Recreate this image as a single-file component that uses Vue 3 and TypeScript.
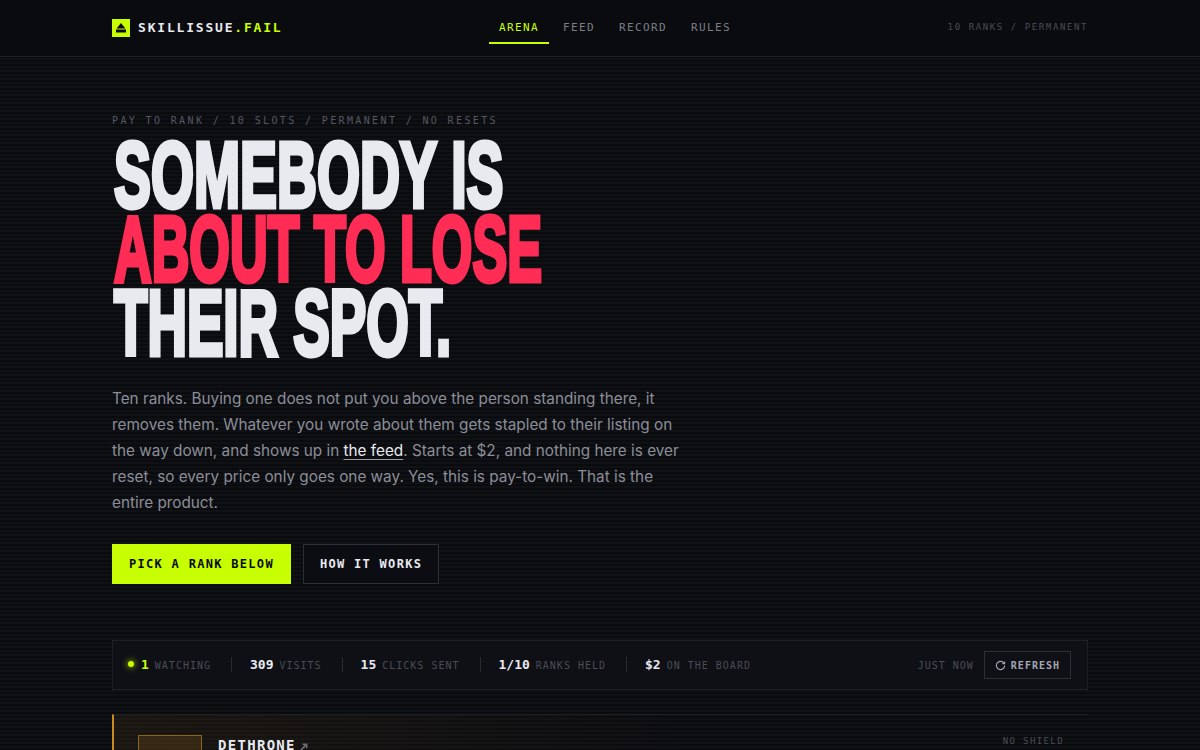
<template>
  <div class="page">
    <header class="topbar">
      <div class="topbar-inner">
        <a class="brand" href="#">
          <span class="brand-mark">
            <svg width="12" height="12" viewBox="0 0 12 12" aria-hidden="true">
              <path d="M6 1 10.5 6.5h-9z" fill="#0a0b0f" />
              <rect x="1" y="7.5" width="10" height="3" fill="#0a0b0f" />
            </svg>
          </span>
          <span class="brand-name">SKILLISSUE<em>.FAIL</em></span>
        </a>
        <nav class="nav">
          <a v-for="item in navItems" :key="item" href="#" :class="['nav-link', { active: item === 'ARENA' }]">{{ item }}</a>
        </nav>
        <div class="topbar-note">10 RANKS / PERMANENT</div>
      </div>
    </header>

    <main class="content">
      <section class="hero">
        <div class="eyebrow">PAY TO RANK / 10 SLOTS / PERMANENT / NO RESETS</div>
        <h1 class="headline">
          <span class="line-one">SOMEBODY IS</span>
          <span class="line-two">ABOUT TO LOSE</span>
          <span class="line-three">THEIR SPOT.</span>
        </h1>
        <p class="lede">
          Ten ranks. Buying one does not put you above the person standing there, it removes them. Whatever
          you wrote about them gets stapled to their listing on the way down, and shows up in
          <a href="#">the feed</a>. Starts at $2, and nothing here is ever reset, so every price only goes one
          way. Yes, this is pay-to-win. That is the entire product.
        </p>
        <div class="actions">
          <button class="btn btn-primary">PICK A RANK BELOW</button>
          <button class="btn btn-ghost">HOW IT WORKS</button>
        </div>
      </section>

      <section class="stats">
        <div class="stat-list">
          <div v-for="(stat, i) in stats" :key="stat.label" class="stat">
            <span v-if="i === 0" class="live-dot"></span>
            <strong :class="{ lime: i === 0 }">{{ stat.value }}</strong>
            <span class="stat-label">{{ stat.label }}</span>
          </div>
        </div>
        <div class="stat-side">
          <span class="updated">JUST NOW</span>
          <button class="refresh">
            <svg width="11" height="11" viewBox="0 0 24 24" fill="none" stroke="currentColor" stroke-width="2.4" aria-hidden="true">
              <path d="M21 12a9 9 0 1 1-2.6-6.4L21 8" />
              <path d="M21 3v5h-5" />
            </svg>
            REFRESH
          </button>
        </div>
      </section>

      <section class="rank-row">
        <div class="rank-badge"></div>
        <div class="rank-title">
          <span>DETHRONE</span>
          <svg class="arrow" width="8" height="8" viewBox="0 0 9 9" fill="none" stroke="currentColor" stroke-width="1.8" aria-hidden="true">
            <path d="M1 8 7.5 1.5M3 1.5h4.5V6" />
          </svg>
        </div>
        <div class="rank-shield">NO SHIELD</div>
      </section>
    </main>
  </div>
</template>

<script setup lang="ts">
  const navItems: string[] = ['ARENA', 'FEED', 'RECORD', 'RULES'];

  const stats: { value: string; label: string }[] = [
    { value: '1', label: 'WATCHING' },
    { value: '309', label: 'VISITS' },
    { value: '15', label: 'CLICKS SENT' },
    { value: '1/10', label: 'RANKS HELD' },
    { value: '$2', label: 'ON THE BOARD' },
  ];
</script>

<style>
  html,
  body {
    margin: 0;
    background: #0a0b0f;
  }
</style>

<style scoped>
  /* scanlines over the whole page, header sits above them */
  .page {
    height: 750px;
    overflow: hidden;
    color: #e8eaf0;
    font-family: Inter, "Liberation Sans", sans-serif;
    background-color: #0a0b0f;
    background-image: repeating-linear-gradient(
      180deg,
      transparent 0,
      transparent 2px,
      rgba(255, 255, 255, 0.025) 2px,
      rgba(255, 255, 255, 0.025) 4px
    );
  }

  .topbar {
    height: 57px;
    box-sizing: border-box;
    background: #0a0b0f;
    border-bottom: 1px solid #1f2025;
  }

  .topbar-inner {
    width: 976px;
    height: 100%;
    margin: 0 auto;
    display: flex;
    justify-content: space-between;
    align-items: center;
  }

  .brand {
    display: flex;
    align-items: center;
    gap: 8px;
    text-decoration: none;
  }

  .brand-mark {
    width: 18px;
    height: 18px;
    background: #c8ff00;
    display: flex;
    align-items: center;
    justify-content: center;
  }

  .brand-name {
    font: 700 13px "DejaVu Sans Mono", monospace;
    letter-spacing: 1.8px;
    color: #e8eaf0;
    position: relative;
    top: -1px;
  }

  .brand-name em {
    font-style: normal;
    color: #c8ff00;
  }

  .nav {
    display: flex;
    gap: 4px;
    margin-top: 2px;
  }

  .nav-link {
    box-sizing: border-box;
    height: 30px;
    padding: 0 10px 2px;
    display: flex;
    align-items: center;
    font: 400 11px "DejaVu Sans Mono", monospace;
    letter-spacing: 1.38px;
    color: #7c7f88;
    text-decoration: none;
    border-bottom: 2px solid transparent;
  }

  .nav-link.active {
    color: #c8ff00;
    border-bottom-color: #c8ff00;
  }

  .topbar-note {
    font: 400 9px "DejaVu Sans Mono", monospace;
    letter-spacing: 1.6px;
    color: #4a4c55;
    position: relative;
    top: -1px;
  }

  .content {
    width: 976px;
    margin: 0 auto;
  }

  .hero {
    padding-top: 57px;
  }

  .eyebrow {
    font: 400 10px "DejaVu Sans Mono", monospace;
    letter-spacing: 2.37px;
    color: #555761;
    line-height: 14px;
  }

  .headline {
    margin: 10px 0 0;
    font-family: "Liberation Sans", sans-serif;
    font-weight: 700;
    font-size: 93px;
    line-height: 74px;
    color: #e8eaf0;
    -webkit-text-stroke: 5px currentColor;
  }

  /* no condensed display font installed, so squeeze a bold weight per line */
  .headline span {
    display: block;
    width: 974px;
    margin-left: 2px;
    white-space: nowrap;
    transform-origin: left center;
  }

  .line-one {
    transform: scaleX(0.595);
  }

  .headline .line-two {
    color: #ff2d55;
    transform: scaleX(0.561);
  }

  .line-three {
    transform: scaleX(0.588);
  }

  .lede {
    width: 576px;
    margin: 26px 0 0;
    font-size: 15.3px;
    line-height: 26px;
    color: #8b8e98;
  }

  .lede a {
    color: #e8eaf0;
    text-decoration: underline;
    text-decoration-color: #9a9ca6;
    text-underline-offset: 3px;
    text-decoration-thickness: 1px;
  }

  .actions {
    display: flex;
    gap: 12px;
    margin-top: 28px;
  }

  .btn {
    box-sizing: border-box;
    height: 40px;
    font: 700 12px "DejaVu Sans Mono", monospace;
    letter-spacing: 1.3px;
    border: 1px solid transparent;
    padding: 0 16px;
  }

  .btn-primary {
    background: #c8ff00;
    color: #0a0b0f;
  }

  .btn-ghost {
    background: #0c0d12;
    color: #e8eaf0;
    border-color: #2e2f36;
  }

  .stats {
    box-sizing: border-box;
    height: 50px;
    margin-top: 56px;
    padding: 0 16px 0 15px;
    display: flex;
    align-items: center;
    justify-content: space-between;
    background: #0f1016;
    border: 1px solid #1f2025;
  }

  .stat-list {
    display: flex;
    align-items: center;
    margin-top: -2px;
  }

  .stat {
    display: flex;
    align-items: baseline;
    gap: 6px;
    padding-right: 20px;
    margin-right: 18px;
    border-right: 1px solid #2a2b31;
    line-height: 12px;
  }

  .stat:last-child {
    border-right: none;
    margin-right: 0;
    padding-right: 0;
  }

  .stat strong {
    font: 700 13px "DejaVu Sans Mono", monospace;
    color: #e8eaf0;
  }

  .stat strong.lime {
    color: #c8ff00;
  }

  .stat-label,
  .updated {
    font: 400 10px "DejaVu Sans Mono", monospace;
    letter-spacing: 1px;
    color: #4a4c55;
  }

  .live-dot {
    width: 6px;
    height: 6px;
    margin-right: 1px;
    border-radius: 50%;
    background: #c8ff00;
    box-shadow: 0 0 6px #c8ff00;
    align-self: center;
  }

  .stat-side {
    display: flex;
    align-items: center;
    gap: 10px;
  }

  .refresh {
    box-sizing: border-box;
    height: 28px;
    padding: 0 10px;
    display: flex;
    align-items: center;
    gap: 5px;
    background: transparent;
    border: 1px solid #2e2f36;
    color: #a5a8b2;
    font: 700 10px "DejaVu Sans Mono", monospace;
    letter-spacing: 1px;
  }

  .rank-row {
    box-sizing: border-box;
    height: 120px;
    margin-top: 24px;
    padding: 20px 24px 0 24px;
    display: flex;
    align-items: flex-start;
    gap: 16px;
    border-top: 1px solid #1f2025;
    border-left: 2px solid #c98a1e;
    background: linear-gradient(90deg, rgba(201, 138, 30, 0.08), rgba(201, 138, 30, 0) 60%);
  }

  .rank-badge {
    width: 64px;
    height: 64px;
    box-sizing: border-box;
    border: 1px solid #8a6420;
    background: rgba(201, 138, 30, 0.16);
  }

  .rank-title {
    display: flex;
    align-items: flex-end;
    gap: 4px;
    font: 700 14px "DejaVu Sans Mono", monospace;
    letter-spacing: 1.3px;
    margin-top: 2px;
  }

  .arrow {
    color: #6a6c75;
    margin-bottom: 2px;
  }

  .rank-shield {
    margin-left: auto;
    font: 400 9px "DejaVu Sans Mono", monospace;
    letter-spacing: 1.4px;
    color: #4a4c55;
    margin-top: 1px;
  }
</style>
